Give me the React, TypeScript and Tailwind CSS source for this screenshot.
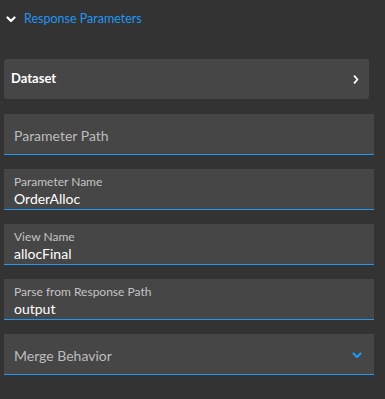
// Panel "Response Parameters" — dark form with a dataset picker and filled text fields.
function ChevronDown({ className }: { className?: string }) {
  return (
    <svg width="10" height="7" viewBox="0 0 10 7" fill="none" stroke="currentColor" strokeWidth="2.2" strokeLinecap="round" strokeLinejoin="round" className={className} aria-hidden="true">
      <path d="M1.5 1.5 5 5l3.5-3.5" />
    </svg>
  );
}

function ChevronRight({ className }: { className?: string }) {
  return (
    <svg width="6" height="9" viewBox="0 0 6 9" fill="none" stroke="currentColor" strokeWidth="1.8" strokeLinecap="round" strokeLinejoin="round" className={className} aria-hidden="true">
      <path d="M1.5 1.2 4.5 4.5 1.5 7.8" />
    </svg>
  );
}

function Field({ label, value }: { label: string; value?: string }) {
  if (!value) {
    return (
      <div className="flex h-[41px] items-center border-b border-[#2196f3] bg-[#464646] px-[10px] pt-[2px] text-[14px] text-[#bdbdbd]">
        {label}
      </div>
    );
  }
  return (
    <div className="flex h-[41px] flex-col border-b border-[#2196f3] bg-[#464646] px-[10px] pt-[5px]">
      <span className="text-[12px] leading-[16px] text-[#c4c4c4]">{label}</span>
      <span className="text-[14px] leading-[17px] text-white">{value}</span>
    </div>
  );
}

export default function App() {
  return (
    <div className="h-[399px] w-[385px] bg-[#333333] font-['Lato',_'Open_Sans',_sans-serif]">
      <div className="flex h-[37px] items-center gap-[8px] pl-[6px] pt-[1px]">
        <ChevronDown className="text-white" />
        <span className="text-[12.5px] text-[#2196f3]">Response Parameters</span>
      </div>

      <div className="flex flex-col pl-[4px] pr-[11px] pt-[22px]">
        <div className="mr-[5px] flex h-[40px] items-center justify-between rounded-[3px] bg-[#464646] pl-[7px] pr-[10px]">
          <span className="text-[13px] font-bold text-white">Dataset</span>
          <ChevronRight className="text-white" />
        </div>

        <div className="mt-[15px] flex flex-col gap-[14px]">
          <Field label="Parameter Path" />
          <Field label="Parameter Name" value="OrderAlloc" />
          <Field label="View Name" value="allocFinal" />
          <Field label="Parse from Response Path" value="output" />
          <div className="flex h-[41px] items-center justify-between border-b border-[#2196f3] bg-[#464646] pl-[10px] pr-[12px] pt-[2px] text-[14px] text-[#bdbdbd]">
            <span>Merge Behavior</span>
            <ChevronDown className="text-[#2196f3]" />
          </div>
        </div>
      </div>
    </div>
  );
}
